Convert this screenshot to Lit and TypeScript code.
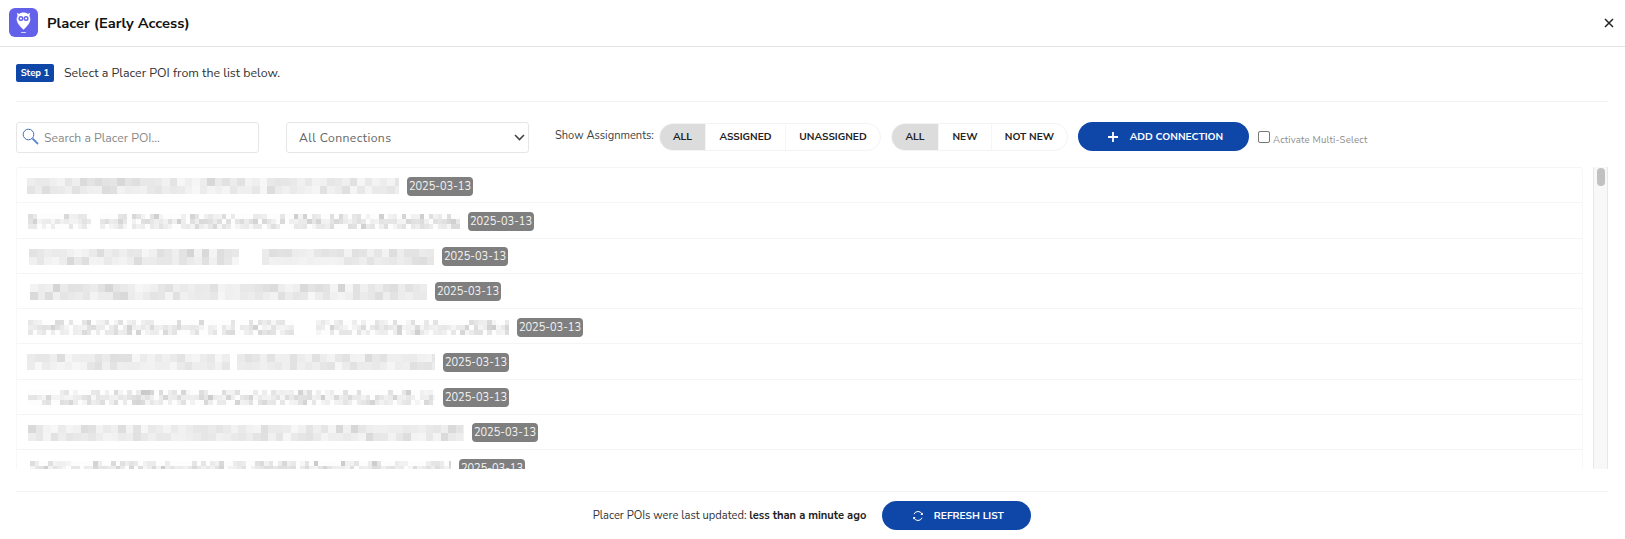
import { LitElement, html, css, svg } from "lit";
import { customElement } from "lit/decorators.js";

interface Row { start: number; end: number; fine: boolean; gap?: [number, number]; seed: number; }

const ROWS: Row[] = [
  { start: 27, end: 399, fine: false, seed: 11 },
  { start: 28, end: 460, fine: true, seed: 23, gap: [90, 99] },
  { start: 29, end: 434, fine: false, seed: 37, gap: [238, 258] },
  { start: 30, end: 427, fine: false, seed: 41 },
  { start: 28, end: 509, fine: true, seed: 53, gap: [292, 314] },
  { start: 27, end: 435, fine: false, seed: 67, gap: [224, 230] },
  { start: 28, end: 435, fine: true, seed: 71 },
  { start: 28, end: 464, fine: false, seed: 83 },
  { start: 30, end: 451, fine: true, seed: 97 },
];

function blocks(r: Row) {
  let s = r.seed * 7919;
  const rnd = () => {
    s = (s * 1664525 + 1013904223) >>> 0;
    return s / 4294967296;
  };
  const cellW = r.fine ? 4.5 : 7.5;
  const rows = r.fine ? 3 : 2;
  const cellH = r.fine ? 5 : 8;
  const width = r.end - r.start;
  const height = rows * cellH;
  const out = [];
  for (let y = 0; y < rows; y++) {
    for (let x = 0; x < Math.ceil(width / cellW); x++) {
      const px = x * cellW;
      if (r.gap && px + r.start > r.gap[0] && px + r.start < r.gap[1]) continue;
      let c: number;
      if (r.fine) {
        const a = rnd();
        const sparse = y === 0 ? 0.5 : y === 2 ? 0.3 : 0.08;
        c = a < sparse ? 253 : 247 - Math.round(rnd() * rnd() * 38 + rnd() * 12);
      } else {
        c = 248 - Math.round(rnd() * rnd() * 26 + rnd() * 14);
      }
      out.push(svg`<rect x=${px} y=${y * cellH} width=${cellW + 0.3} height=${cellH + 0.3} fill=${`rgb(${c},${c},${c})`}></rect>`);
    }
  }
  return html`<svg class="blur" style="margin-left:${r.start - 27}px" width=${width} height=${height} viewBox="0 0 ${width} ${height}">${out}</svg>`;
}

@customElement("app-root")
export class AppRoot extends LitElement {
  static styles = css`
    :host { display: block; width: 1625px; height: 539px; background: #fff; overflow: hidden;
      font-family: "Nunito Sans", Lato, "Open Sans", sans-serif; color: #222; }
    .page { display: flex; flex-direction: column; height: 539px; }
    .head { height: 47px; border-bottom: 1px solid #e4e4e4; display: flex; align-items: center;
      padding: 0 11px 0 9px; box-sizing: content-box; }
    .logo { width: 29px; height: 29px; margin-right: 9px; display: block; margin-top: -1px; }
    .title { font-size: 14.7px; font-weight: 700; color: #111; flex: 1; margin-top: -1px; white-space: nowrap; }
    .close { width: 10px; height: 10px; display: block; margin-top: -1px; }
    .body { padding: 0 17px 0 16px; display: flex; flex-direction: column; flex: 1; }
    .step { display: flex; align-items: center; height: 54px; border-bottom: 1px solid #f2f2f2; }
    .stepin { display: flex; align-items: center; margin-top: -3px; }
    .badge { background: #0f47a9; color: #fff; font-size: 9.5px; font-weight: 700; width: 38px; height: 18px;
      border-radius: 2px; display: flex; align-items: center; justify-content: center; margin-right: 10px; }
    .steptxt { font-size: 12.4px; color: #333; white-space: nowrap; margin-top: -1px; }
    .tools { display: flex; align-items: flex-start; height: 65px; padding-top: 20px; box-sizing: border-box; }
    .search { width: 243px; height: 31px; box-sizing: border-box; border: 1px solid #e6e6e6; border-radius: 3px;
      display: flex; align-items: center; padding-left: 5px; margin-right: 27px; }
    .search svg { width: 17px; height: 17px; margin-right: 5px; margin-top: -3px; }
    .ph { font-size: 12.2px; color: #8a8a8a; white-space: nowrap; }
    .select { width: 243px; height: 31px; box-sizing: border-box; border: 1px solid #e6e6e6; border-radius: 3px;
      display: flex; align-items: center; justify-content: space-between; padding: 0 3px 0 12px; margin-right: 26px; }
    .select span { font-size: 12.2px; letter-spacing: 0.4px; color: #666; white-space: nowrap; }
    .select svg { width: 11px; height: 7px; }
    .showlbl { font-size: 11.1px; color: #444; width: 104px; line-height: 28px; white-space: nowrap; }
    .seg { display: flex; height: 28px; border: 1px solid #f3f3f3; border-radius: 14px; overflow: hidden;
      box-sizing: border-box; margin-top: 1px; }
    .seg + .seg { margin-left: 10px; }
    .seg div { font-size: 10.2px; font-weight: 700; color: #222; white-space: nowrap;
      display: flex; align-items: center; justify-content: center; box-sizing: border-box; border-left: 1px solid #f5f5f5; }
    .seg div:first-child { border-left: 0; }
    .seg .on { background: #dcdcdc; }
    .btn { background: #0f47a9; border-radius: 15px; height: 29px; color: #fff; display: flex; align-items: center;
      justify-content: center; font-size: 10.2px; font-weight: 700; white-space: nowrap; }
    .add { width: 171px; margin-left: 10px; }
    .add svg { width: 10px; height: 10px; margin-right: 12px; margin-left: 4px; }
    .multi { display: flex; align-items: flex-start; margin-left: 9px; margin-top: 9px; }
    .box { width: 12px; height: 12px; box-sizing: border-box; border: 1px solid #777; border-radius: 2px; margin-right: 3px; }
    .multi span { font-size: 9.6px; letter-spacing: 0.2px; color: #8d8d8d; margin-top: 2px; white-space: nowrap; }
    .listwrap { display: flex; height: 302px; }
    .list { width: 1567px; height: 302px; overflow: hidden; border-left: 1px solid #f8f8f8; border-right: 1px solid #f8f8f8;
      border-top: 1px solid #f5f5f5; box-sizing: border-box; border-radius: 3px 3px 0 0; }
    .row { height: 35.28px; box-sizing: border-box; border-bottom: 1px solid #f5f5f5; display: flex; align-items: center;
      padding: 2px 0 0 10px; }
    .blur { display: block; flex: none; shape-rendering: crispEdges; }
    .date { background: #7f7f7f; color: #f4f4f4; font-size: 11px; font-weight: 400; height: 19px; border-radius: 4px;
      margin-left: 8px; display: flex; align-items: center; flex: none; width: 66px; box-sizing: border-box;
      justify-content: center; white-space: nowrap; }
    .track { width: 15px; height: 302px; margin-left: 10px; box-sizing: border-box; background: #f8f8f8;
      border-left: 1px solid #e8e8e8; border-right: 1px solid #e8e8e8; padding: 1px 3px 0 3px; }
    .thumb { width: 8px; height: 18px; border-radius: 4px; background: #c1c1c1; }
    .foot { margin-top: 22px; border-top: 1px solid #f2f2f2; display: flex; justify-content: center; align-items: center;
      height: 47px; }
    .foot p { margin: 0 16px 0 0; font-size: 11.15px; color: #333; white-space: nowrap; }
    .foot b { font-weight: 700; color: #222; }
    .refresh { width: 149px; }
    .refresh svg { width: 12px; height: 12px; margin-right: 10px; margin-left: 2px; }
  `;

  seg(items: [string, number][]) {
    return html`<div class="seg">${items.map(([t, w], i) => html`<div class=${i === 0 ? "on" : ""} style="width:${w}px">${t}</div>`)}</div>`;
  }

  render() {
    return html`<div class="page">
      <div class="head">
        <svg class="logo" viewBox="0 0 29 29">
          <rect width="29" height="29" rx="6" fill="#6360ea"></rect>
          <path d="M14.5 4.5c-2 0-3.4.6-4.4 1.4L7.900 4.800 8.600 8C7.700 9.300 7.500 11 7.800 12.600c.6 3.400 3.600 6.200 6.700 9.200 3.100-3 6.100-5.800 6.700-9.200.3-1.600.1-3.300-.8-4.600l.7-3.200-2.200 1.100c-1-.8-2.400-1.400-4.400-1.400z" fill="#fff"></path>
          <circle cx="11.900" cy="10.500" r="2.500" fill="#6360ea"></circle>
          <circle cx="17.100" cy="10.500" r="2.500" fill="#6360ea"></circle>
          <circle cx="11.900" cy="10.500" r="1.100" fill="#fff"></circle>
          <circle cx="17.100" cy="10.500" r="1.100" fill="#fff"></circle>
          <rect x="12" y="24" width="5" height="1" rx=".5" fill="#d9d8fb"></rect>
        </svg>
        <div class="title">Placer (Early Access)</div>
        <svg class="close" viewBox="0 0 10 10"><path d="M1 1l8 8M9 1l-8 8" stroke="#222" stroke-width="1.500" fill="none"></path></svg>
      </div>
      <div class="body">
        <div class="step"><div class="stepin"><div class="badge">Step 1</div><div class="steptxt">Select a Placer POI from the list below.</div></div></div>
        <div class="tools">
          <div class="search">
            <svg viewBox="0 0 17 17"><circle cx="6.500" cy="6.500" r="5.300" fill="none" stroke="#3d6fc0" stroke-width="1"></circle><path d="M10.500 10.500l5.500 5.500" stroke="#5f88cc" stroke-width="1.800"></path></svg>
            <span class="ph">Search a Placer POI...</span>
          </div>
          <div class="select"><span>All Connections</span>
            <svg viewBox="0 0 11 7"><path d="M1 1l4.500 4.500L10 1" fill="none" stroke="#444" stroke-width="1.600"></path></svg>
          </div>
          <div class="showlbl">Show Assignments:</div>
          ${this.seg([["ALL", 45], ["ASSIGNED", 80], ["UNASSIGNED", 95]])}
          ${this.seg([["ALL", 46], ["NEW", 53], ["NOT NEW", 76]])}
          <div class="btn add">
            <svg viewBox="0 0 10 10"><path d="M5 0v10M0 5h10" stroke="#fff" stroke-width="1.800"></path></svg>ADD CONNECTION
          </div>
          <div class="multi"><div class="box"></div><span>Activate Multi-Select</span></div>
        </div>
        <div class="listwrap">
          <div class="list">
            ${ROWS.map((r) => html`<div class="row">${blocks(r)}<div class="date">2025-03-13</div></div>`)}
          </div>
          <div class="track"><div class="thumb"></div></div>
        </div>
        <div class="foot">
          <p>Placer POIs were last updated: <b>less than a minute ago</b></p>
          <div class="btn refresh">
            <svg viewBox="0 0 12 12"><path d="M2 4.200A4.300 4.300 0 0 1 10 4.200M10 7.800A4.300 4.300 0 0 1 2 7.800" fill="none" stroke="#fff" stroke-width="1"></path><path d="M10.800 2.500v2.500H8.300M1.200 9.500V7h2.500" fill="#fff"></path></svg>REFRESH LIST
          </div>
        </div>
      </div>
    </div>`;
  }
}
